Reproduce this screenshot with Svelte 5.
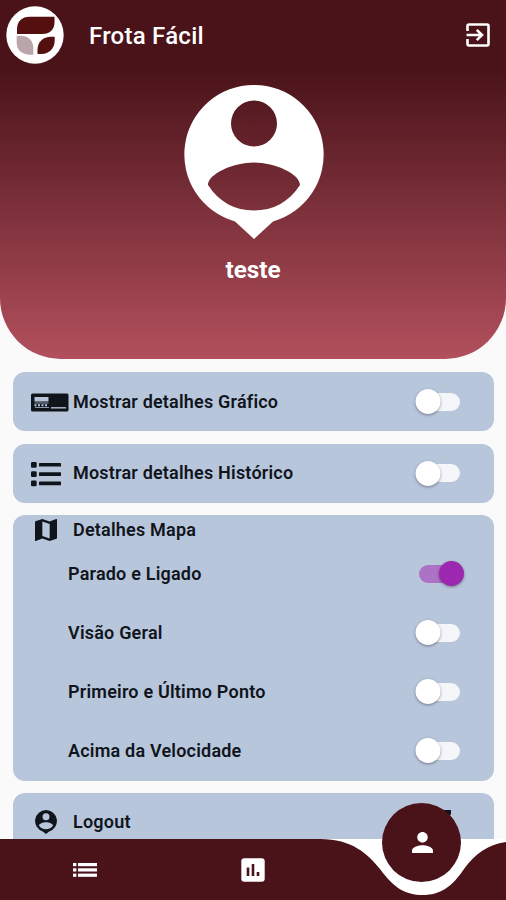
<script>
	let settings = $state([
		{ id: 'grafico', label: 'Mostrar detalhes Gráfico', active: false },
		{ id: 'historico', label: 'Mostrar detalhes Histórico', active: false }
	]);

	let mapSettings = $state([
		{ label: 'Parado e Ligado', active: true },
		{ label: 'Visão Geral', active: false },
		{ label: 'Primeiro e Último Ponto', active: false },
		{ label: 'Acima da Velocidade', active: false }
	]);
</script>

{#snippet toggle(item)}
	<button
		class="switch"
		class:on={item.active}
		role="switch"
		aria-checked={item.active}
		aria-label={item.label}
		onclick={() => (item.active = !item.active)}
	>
		<span class="thumb"></span>
	</button>
{/snippet}

{#snippet personPin()}
	<path
		fill-rule="evenodd"
		d="M70 0A69.500 69.500 0 0 1 89 136.400L70 154L51 136.400A69.500 69.500 0 0 1 70 0zM70 15.500a23 23 0 1 0 0 46a23 23 0 1 0 0-46zM70 77.500C49 77.500 24 89 24 100C35 117 51 125.500 70 125.500S105 117 116 100C116 89 91 77.500 70 77.500z"
	/>
{/snippet}

<div class="screen">
	<section class="profile">
		<header>
			<svg class="logo" width="58" height="58" viewBox="0 0 58 58" aria-hidden="true">
				<circle cx="29" cy="29" r="28.7" fill="#fff" />
				<path d="M11 28V23C11 15.500 16 10.700 23.500 10.700H48.500V16.500C48.500 23.500 43.500 28 36.500 28z" fill="#54100f" />
				<path d="M10.700 29.700H15C22.500 29.700 27.300 35 27.300 42V48.700H24C16 48.700 10.700 44 10.700 37z" fill="#b9a5aa" />
				<path d="M31.500 48V44C31.500 36 37 30.700 45 30.700H48.700V34.500C48.700 42.500 43 48 35.500 48z" fill="#54100f" />
			</svg>
			<h1>Frota Fácil</h1>
			<button class="exit" aria-label="Sair">
				<svg width="24" height="24" viewBox="0 0 24 24" fill="none" stroke="#fff" stroke-width="2.600">
					<path d="M1.500 8V3Q1.500 1.500 3 1.500H21Q22.500 1.500 22.500 3V21Q22.500 22.500 21 22.500H3Q1.500 22.500 1.500 21V16" />
					<path d="M.5 12H15M10.800 6.800L16 12L10.800 17.200" />
				</svg>
			</button>
		</header>
		<svg class="avatar" width="140" height="154" viewBox="0 0 140 154" fill="#fff" aria-hidden="true">
			{@render personPin()}
		</svg>
		<h2>teste</h2>
	</section>

	<main>
		{#each settings as item (item.id)}
			<div class="card setting">
				<span class="icon">
					{#if item.id === 'grafico'}
						<svg width="38" height="19" viewBox="0 0 38 19">
							<rect y=".5" width="37.500" height="18" rx="1.500" fill="#10151c" />
							<rect x="3.500" y="4" width="14" height="4.500" fill="#b6c4d9" />
							<path d="M3.500 10H17.500M4 14.500H18" stroke="#8c99aa" />
							<path d="M3.500 12.300H17.500" stroke="#b6c4d9" stroke-width="2" stroke-dasharray="2 1.500" />
							<path d="M20 14.800H35" stroke="#a8b5c7" stroke-width="1.500" />
						</svg>
					{:else}
						<svg width="31" height="25" viewBox="0 0 31 25" fill="#10151c">
							{#each [0, 9.3, 18.6] as y}
								<rect {y} width="5.700" height="5.700" rx="1.300" />
								<rect x="8" y={y + 1} width="22" height="3.600" rx=".5" />
							{/each}
						</svg>
					{/if}
				</span>
				<span class="label">{item.label}</span>
				{@render toggle(item)}
			</div>
		{/each}

		<div class="card map">
			<div class="map-title">
				<span class="icon small">
					<svg width="22" height="22" viewBox="3 3 18 18" fill="#10151c">
						<path d="M20.500 3l-.16.030L15 5.100 9 3 3.360 4.900c-.21.070-.36.250-.36.480V20.500c0 .28.220.5.5.5l.16-.030L9 18.900l6 2.100 5.640-1.900c.21-.070.360-.250.360-.480V3.500c0-.28-.220-.5-.5-.5zM15 19l-6-2.110V5l6 2.110V19z" />
					</svg>
				</span>
				<span>Detalhes Mapa</span>
			</div>
			{#each mapSettings as item}
				<div class="map-row">
					<span class="label">{item.label}</span>
					{@render toggle(item)}
				</div>
			{/each}
		</div>

		<div class="card logout">
			<span class="icon small">
				<svg width="22" height="24" viewBox="0 0 22 24" fill="#10151c">
					<path
						fill-rule="evenodd"
						d="M11 0a11 11 0 0 1 3.200 21.500L11 24L7.800 21.500A11 11 0 0 1 11 0zM11 3.200a3.500 3.500 0 1 0 0 7a3.500 3.500 0 1 0 0-7zM11 12.200C8 12.200 4 13.600 4 15.500C5.500 18 8 19.300 11 19.300S16.500 18 18 15.500C18 13.600 14 12.200 11 12.200z"
					/>
				</svg>
			</span>
			<span class="label">Logout</span>
			<svg class="arrow" width="10" height="10" viewBox="0 0 10 10">
				<path d="M0 0H10V4L8 7H4V4H0z" fill="#10151c" />
			</svg>
		</div>
	</main>

	<nav>
		<svg class="curve" width="506" height="61" viewBox="0 0 506 61" aria-hidden="true">
			<rect x="300" width="206" height="61" fill="#fff" />
			<path
				d="M0 0H320C352 0 368 15 380 30C394 49 405 56 423 56C440 56 452 48 464 30C476 14 487 6 506 3V61H0z"
				fill="#4a1219"
			/>
		</svg>
		<button class="tab" aria-label="Lista">
			<svg width="24" height="14" viewBox="0 0 24 14" fill="#fff">
				{#each [0, 5.3, 10.6] as y}
					<rect {y} width="3.400" height="3.200" />
					<rect x="5" {y} width="19" height="3.200" />
				{/each}
			</svg>
		</button>
		<button class="tab" aria-label="Gráficos">
			<svg width="24" height="24" viewBox="0 0 24 24">
				<rect x=".3" y=".3" width="23.400" height="23.400" rx="3" fill="#fff" />
				<path d="M7 9.500V18M12 6V18M17 14V18" stroke="#4a1219" stroke-width="2.600" />
			</svg>
		</button>
		<button class="tab current" aria-label="Perfil">
			<svg width="21" height="21" viewBox="4 4 16 16" fill="#fff">
				<path d="M12 12c2.210 0 4-1.790 4-4s-1.790-4-4-4-4 1.790-4 4 1.790 4 4 4zm0 2c-2.670 0-8 1.340-8 4v2h16v-2c0-2.660-5.330-4-8-4z" />
			</svg>
		</button>
	</nav>
</div>

<style>
	:global(body) {
		margin: 0;
		background: #fafafa;
	}

	.screen {
		position: relative;
		width: 506px;
		height: 900px;
		overflow: hidden;
		background: #fafafa;
		font-family: Roboto, sans-serif;
		color: #10151c;
	}

	button {
		border: none;
		background: none;
		padding: 0;
		cursor: pointer;
	}

	svg {
		display: block;
		flex-shrink: 0;
	}

	.profile {
		display: flex;
		flex-direction: column;
		align-items: center;
		height: 359px;
		border-radius: 0 0 61px 61px;
		background: linear-gradient(#4a131a 0, #4a131a 70px, #b2505d 359px);
		color: #fff;
	}

	header {
		display: flex;
		align-items: center;
		width: 100%;
		height: 84px;
		padding: 0 16px 14px 6px;
		box-sizing: border-box;
	}

	h1 {
		flex: 1;
		margin: 2px 0 0 25px;
		font-size: 24px;
		font-weight: 500;
		line-height: 30px;
		letter-spacing: 0.250px;
	}

	.avatar {
		margin-top: 0.500px;
		margin-left: 1px;
	}

	h2 {
		margin: 17px 0 0;
		font-size: 24.300px;
		font-weight: 700;
		line-height: 28px;
	}

	main {
		display: flex;
		flex-direction: column;
		gap: 12.500px;
		padding: 13px 12px 0 12.500px;
	}

	.card {
		background: #b8c6dc;
		border-radius: 12px;
		box-sizing: border-box;
		font-size: 18px;
		font-weight: 600;
		line-height: 22px;
		letter-spacing: 0.200px;
	}

	.setting {
		display: flex;
		align-items: center;
		height: 59px;
		padding: 0 34px 0 18.500px;
	}

	.icon {
		width: 42px;
		flex-shrink: 0;
		padding-top: 2px;
	}

	.icon.small {
		width: 38.500px;
		padding: 0 0 0 3.500px;
	}

	.label {
		flex: 1;
	}

	.switch {
		display: flex;
		align-items: center;
		width: 41px;
		height: 18px;
		border-radius: 9px;
		background: #f4f6fa;
	}

	.thumb {
		flex-shrink: 0;
		width: 25px;
		height: 25px;
		border-radius: 50%;
		background: #fff;
		box-shadow: 0 1px 3px rgba(0, 0, 0, 0.4);
		transform: translateX(-3.500px);
	}

	.switch.on {
		background: #ac72c6;
	}

	.switch.on .thumb {
		background: #9c27b0;
		transform: translateX(20px);
	}

	.map {
		height: 265.500px;
	}

	.map-title {
		display: flex;
		align-items: center;
		height: 29px;
		padding-left: 18.500px;
	}

	.map-row {
		display: flex;
		align-items: center;
		height: 59px;
		padding: 0 34px 0 55.500px;
	}

	.logout {
		display: flex;
		align-items: center;
		height: 58px;
		padding: 0 43px 0 18.500px;
	}

	.arrow {
		margin-bottom: 15px;
	}

	nav {
		position: absolute;
		left: 0;
		bottom: 0;
		display: grid;
		grid-template-columns: repeat(3, 1fr);
		width: 506px;
		height: 61px;
	}

	.curve {
		position: absolute;
		inset: 0;
	}

	.tab {
		position: relative;
		display: flex;
		align-items: center;
		justify-content: center;
		padding-left: 1px;
	}

	.current {
		width: 79px;
		height: 79px;
		box-sizing: border-box;
		justify-self: center;
		margin-top: -36px;
		border-radius: 50%;
		background: #4a1219;
	}
</style>
